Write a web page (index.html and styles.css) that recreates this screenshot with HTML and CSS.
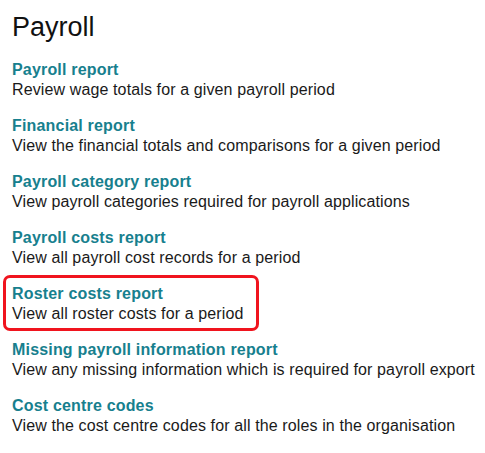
FILE: index.html
```html
<!DOCTYPE html>
<html lang="en">
<head>
  <meta charset="UTF-8" />
  <title>Payroll</title>
  <link rel="stylesheet" href="styles.css">
</head>
<body>
  <div class="page">
    <h1>Payroll</h1>
    <ul class="reports">
      <li class="report">
        <a href="#">Payroll report</a>
        <p>Review wage totals for a given payroll period</p>
      </li>
      <li class="report">
        <a href="#">Financial report</a>
        <p>View the financial totals and comparisons for a given period</p>
      </li>
      <li class="report">
        <a href="#">Payroll category report</a>
        <p>View payroll categories required for payroll applications</p>
      </li>
      <li class="report">
        <a href="#">Payroll costs report</a>
        <p>View all payroll cost records for a period</p>
      </li>
      <li class="report highlight">
        <a href="#">Roster costs report</a>
        <p>View all roster costs for a period</p>
      </li>
      <li class="report">
        <a href="#">Missing payroll information report</a>
        <p>View any missing information which is required for payroll export</p>
      </li>
      <li class="report">
        <a href="#">Cost centre codes</a>
        <p>View the cost centre codes for all the roles in the organisation</p>
      </li>
    </ul>
  </div>
</body>
</html>
```

FILE: styles.css
```css
body {
  margin: 0;
  background: #fff;
  color: #1a1a1a;
  font-family: "Liberation Sans", Arial, sans-serif;
}

.page {
  padding: 11px 3px 10px;
}

h1 {
  margin: 0 0 8px 9px;
  font-size: 27px;
  line-height: 32px;
  font-weight: normal;
  color: #111;
}

.reports {
  list-style: none;
  margin: 0;
  padding: 0;
}

.report {
  width: fit-content;
  padding: 6px 4px 4px 6px;
  border: 3px solid transparent;
  border-radius: 7px;
  font-size: 16px;
  line-height: 20px;
  letter-spacing: 0.12px;
  white-space: nowrap;
}

.report a {
  display: block;
  color: #17808e;
  font-weight: bold;
  letter-spacing: 0.18px;
  text-decoration: none;
}

.report p {
  margin: 0;
}

.highlight {
  padding-right: 13px;
  border-color: #f0141e;
}
```
